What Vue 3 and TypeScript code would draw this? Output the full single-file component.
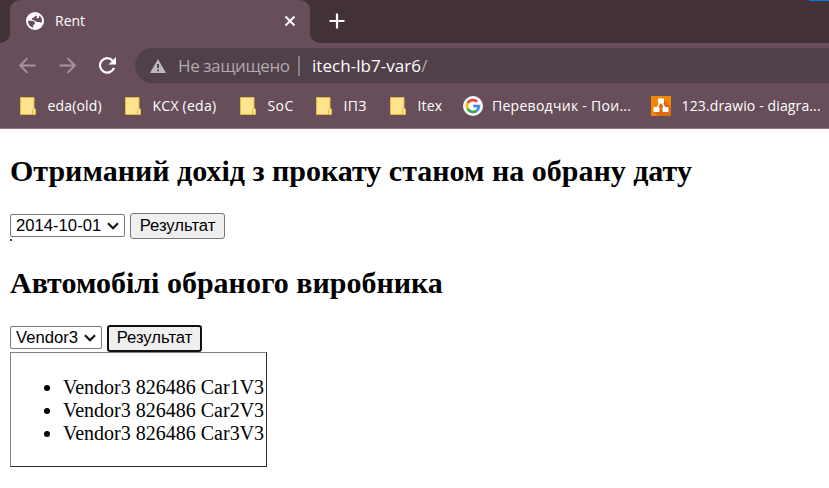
<script setup lang="ts">
import { ref } from 'vue'

interface Bookmark {
  title: string
  icon: 'folder' | 'google' | 'drawio'
  kind: string
}

const bookmarks: Bookmark[] = [
  { title: 'eda(old)', icon: 'folder', kind: 'b-eda' },
  { title: 'KCX (eda)', icon: 'folder', kind: 'b-kcx' },
  { title: 'SoC', icon: 'folder', kind: 'b-soc' },
  { title: 'ІПЗ', icon: 'folder', kind: 'b-ipz' },
  { title: 'Itex', icon: 'folder', kind: 'b-itex' },
  { title: 'Переводчик - Пои...', icon: 'google', kind: 'b-translate' },
  { title: '123.drawio - diagra...', icon: 'drawio', kind: 'b-drawio' },
]

const date = ref('2014-10-01')
const vendor = ref('Vendor3')
const cars: string[] = ['Vendor3 826486 Car1V3', 'Vendor3 826486 Car2V3', 'Vendor3 826486 Car3V3']
</script>

<template>
  <div class="window">
    <header class="chrome">
      <div class="tabstrip">
        <div class="corner left"></div>
        <div class="tab">
          <svg class="globe" width="18" height="18" viewBox="0 0 18 18">
            <circle cx="9" cy="9" r="9" fill="#fff" />
            <path d="M9.500 2.200C11 2.200 10.800 4 9.300 4.300 7.800 4.600 8 6 6.300 6.300 5.300 6.600 5.600 7.900 7 7.900 9 7.900 9.500 9.900 11 9.900H12.800C13.600 9.900 14 10.700 15.700 10.500A7 7 0 0 0 13.500 3.600C12.500 5.200 13.500 6 12 6.500 10.800 6.700 10.300 5.500 11 4.500Z" fill="#674e5a" />
            <path d="M2.100 8.700H5.500C7.800 8.700 9 10 9 11.500 9 12.700 7.200 12.500 7.200 13.800V15.700A7 7 0 0 1 2.100 8.700Z" fill="#674e5a" />
          </svg>
          <span class="tab-title">Rent</span>
          <svg class="close" width="12" height="12" viewBox="0 0 12 12">
            <path d="M1.500 1.500 10.500 10.500M10.500 1.500 1.500 10.500" stroke="#fff" stroke-width="2" />
          </svg>
        </div>
        <div class="corner right"></div>
        <svg class="plus" width="16" height="16" viewBox="0 0 16 16">
          <path d="M8 .5V15.500M.5 8H15.500" stroke="#fff" stroke-width="2.200" />
        </svg>
        <div class="accent"></div>
      </div>

      <div class="toolbar">
        <svg class="nav" width="18" height="18" viewBox="0 0 18 18">
          <path d="M17.500 8.500H2.500M9.500 1.200 2.200 8.500 9.500 15.800" fill="none" stroke="#a5959c" stroke-width="1.900" />
        </svg>
        <svg class="nav" width="18" height="18" viewBox="0 0 18 18">
          <path d="M1.500 8.500H16.500M9.500 1.200 16.800 8.500 9.500 15.800" fill="none" stroke="#a5959c" stroke-width="1.900" />
        </svg>
        <svg class="nav" width="18" height="18" viewBox="0 0 18 18">
          <path d="M14.500 3.500A7.200 7.200 0 1 0 16 10.800" fill="none" stroke="#fff" stroke-width="2.200" />
          <path d="M18 0V7.500H10.500Z" fill="#fff" />
        </svg>
        <div class="omnibox">
          <svg width="16" height="14" viewBox="0 0 16 14">
            <path d="M8 0 16 14H0Z" fill="#bdb8bb" />
            <path d="M8 5V9M8 10.500V12.300" stroke="#50404a" stroke-width="1.900" />
          </svg>
          <span class="insecure">Не защищено</span>
          <span class="divider"></span>
          <span class="url">itech-lb7-var6<i>/</i></span>
        </div>
      </div>

      <nav class="bookmarks">
        <a v-for="b in bookmarks" :key="b.title" class="bookmark" :class="b.kind">
          <svg v-if="b.icon === 'folder'" class="folder" width="16" height="18" viewBox="0 0 16 18">
            <path d="M.5.5H14V11.500L15.500 12V17.500H.5Z" fill="#ffe490" stroke="#e3b943" />
            <path d="M12.500 17V13.500L14 11.500" fill="none" stroke="#e3b943" />
          </svg>
          <svg v-else-if="b.icon === 'google'" width="20" height="20" viewBox="0 0 20 20">
            <circle cx="10" cy="10" r="10" fill="#fff" />
            <g fill="none" stroke-width="2.700">
              <path d="M14.200 5.800A6 6 0 0 0 4.700 7.200" stroke="#ea4335" />
              <path d="M4.700 7.200A6 6 0 0 0 4.700 12.800" stroke="#fbbc05" />
              <path d="M4.700 12.800A6 6 0 0 0 13.800 14.600" stroke="#34a853" />
              <path d="M13.800 14.600A6 6 0 0 0 16 10.200H10.200" stroke="#4285f4" />
            </g>
          </svg>
          <svg v-else width="20" height="20" viewBox="0 0 20 20">
            <rect width="20" height="20" fill="#f08705" />
            <path d="M12.500 3 20 10.500V20H7L3 16 7 12 8.500 8Z" fill="#df6c0c" />
            <path d="M10 5 5.500 13M10 5 14.500 13" stroke="#fff" stroke-width="1.500" />
            <rect x="7" y="2.500" width="6" height="5" rx=".7" fill="#fff" />
            <rect x="2.500" y="11" width="6" height="5" rx=".7" fill="#fff" />
            <rect x="11.500" y="11" width="6" height="5" rx=".7" fill="#fff" />
          </svg>
          <span>{{ b.title }}</span>
        </a>
      </nav>
    </header>

    <main class="page">
      <h2 class="first">Отриманий дохід з прокату станом на обрану дату</h2>
      <div class="controls">
        <label class="select date">
          <select v-model="date"><option>2014-10-01</option></select>
          <svg width="12" height="8" viewBox="0 0 12 8"><path d="M1 1.200 6 6.200 11 1.200" fill="none" stroke="#111" stroke-width="2.200" /></svg>
        </label>
        <button type="button">Результат</button>
      </div>
      <div class="empty-table"></div>
      <h2 class="second">Автомобілі обраного виробника</h2>
      <div class="controls">
        <label class="select vendor">
          <select v-model="vendor"><option>Vendor3</option></select>
          <svg width="12" height="8" viewBox="0 0 12 8"><path d="M1 1.200 6 6.200 11 1.200" fill="none" stroke="#111" stroke-width="2.200" /></svg>
        </label>
        <button type="button" class="focused">Результат</button>
      </div>
      <div class="result">
        <ul>
          <li v-for="car in cars" :key="car">{{ car }}</li>
        </ul>
      </div>
    </main>
  </div>
</template>

<style>
body { margin: 0; background: #fff; overflow: hidden; }
</style>

<style scoped>
.window { width: 829px; height: 488px; overflow: hidden; background: #fff; }
.window * { box-sizing: border-box; }
svg { display: block; flex: none; }
.chrome {
  height: 129px;
  background: #674e5a;
  border-bottom: 1px solid #8b7781;
  color: #fff;
  font: 14px/20px "Open Sans", "Noto Sans", sans-serif;
  white-space: nowrap;
}
.tabstrip { display: flex; height: 43px; background: #433138; position: relative; }
.corner { flex: none; width: 10px; height: 43px; background: #674e5a; }
.corner::before { content: ""; display: block; height: 43px; background: #433138; }
.corner.left::before { border-bottom-right-radius: 10px; }
.corner.right::before { border-bottom-left-radius: 10px; }
.tab {
  flex: none;
  display: flex;
  align-items: center;
  width: 300px;
  height: 43px;
  padding: 0 14px 1px 16px;
  border-radius: 10px 10px 0 0;
  background: #674e5a;
}
.tab-title { margin-left: 11px; }
.close { margin-left: auto; }
.plus { margin: 13px 0 0 9px; }
.accent { position: absolute; top: 0; right: 0; width: 20px; height: 1px; background: #0078d7; }
.toolbar { display: flex; align-items: center; height: 45px; padding-left: 18px; }
.nav { margin-right: 22px; }
.omnibox {
  flex: 1;
  display: flex;
  align-items: center;
  height: 35px;
  margin-left: -3px;
  padding-left: 15px;
  border-radius: 18px 0 0 18px;
  background: #50404a;
  font-size: 17px;
}
.insecure { width: 111px; margin-left: 12px; color: #b3a9ae; letter-spacing: -.4px; }
.divider { width: 2px; height: 20px; margin: 0 12px 0 9px; background: #8b8086; }
.url { letter-spacing: .05px; }
.url i { font-style: normal; color: #b3a9ae; }
.bookmarks { display: flex; align-items: center; height: 36px; padding-left: 20px; }
.bookmark { flex: none; display: flex; align-items: center; gap: 11.5px; }
.b-eda { width: 105px; letter-spacing: .15px; }
.b-kcx { width: 115px; letter-spacing: .25px; }
.b-soc { width: 76px; letter-spacing: .4px; }
.b-ipz { width: 74px; letter-spacing: .3px; }
.b-itex { width: 73px; letter-spacing: .2px; }
.b-translate { width: 188px; gap: 9px; letter-spacing: .28px; }
.b-drawio { gap: 10.5px; letter-spacing: .13px; }

.page { padding: 0 10px; color: #000; font: 20px/23px "Liberation Serif", serif; }
h2 { margin: 0; font-size: 30px; line-height: 34px; font-weight: bold; white-space: nowrap; }
.first { padding-top: 25px; }
.second { padding-top: 25px; }
.controls { display: flex; align-items: flex-start; gap: 5px; height: 26px; margin-top: 25px; }
.select {
  display: flex;
  align-items: center;
  height: 23px;
  margin-top: 1px;
  padding: 0 5px;
  border: 1px solid #767676;
  border-radius: 2px;
}
.select select {
  flex: 1;
  min-width: 0;
  padding: 0;
  border: 0;
  background: none;
  appearance: none;
  color: #000;
  font: 16.667px/19px "Liberation Sans", sans-serif;
}
.date { width: 115px; }
.vendor { width: 92px; }
button {
  width: 95px;
  height: 26px;
  padding: 0;
  border: 1px solid #767676;
  border-radius: 3px;
  background: #efefef;
  color: #000;
  font: 16.667px/20px "Liberation Sans", sans-serif;
}
button.focused { height: 27px; padding-bottom: 2px; border: 2px solid #101010; position: relative; }
.empty-table { width: 2px; height: 2px; background: #444; }
.result {
  width: 257px;
  height: 115px;
  margin-top: 1px;
  border: 1px solid;
  border-color: #808080 #2b2b2b #2b2b2b #808080;
}
ul { margin: 0; padding: 23px 0 0 52px; white-space: nowrap; }
</style>
